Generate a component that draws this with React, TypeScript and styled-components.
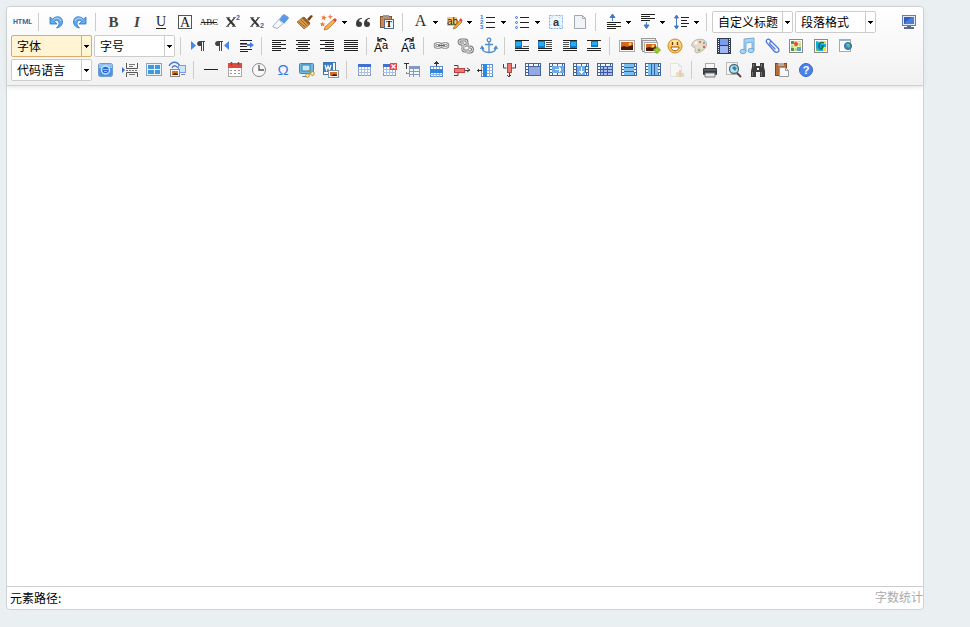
import React from "react";
import styled, { createGlobalStyle, css } from "styled-components";

const GlobalStyle = createGlobalStyle`
  * { box-sizing: border-box; }
  body {
    margin: 0;
    background: #eaeff2;
    color: #000;
    font: 12px/20px "Noto Sans CJK SC", sans-serif;
  }
`;

const Page = styled.main`
  padding: 6px 46px 16px 6px;
`;

const Editor = styled.section`
  display: flex;
  flex-direction: column;
  background: #fff;
  border: 1px solid #d0d3d4;
  border-radius: 4px;
`;

const Toolbar = styled.div`
  padding: 3px 2px 3px 4px;
  background: linear-gradient(#fff, #f1f1f1);
  border-bottom: 1px solid #d0d0d0;
  border-radius: 4px 4px 0 0;
  box-shadow: 0 1px 4px rgba(204, 204, 204, 0.6);
`;

const ToolRow = styled.div`
  display: flex;
  align-items: center;
  height: 24px;
`;

const Spacer = styled.span`
  flex: 1;
`;

const Divider = styled.span`
  flex: none;
  width: 1px;
  height: 18px;
  margin: 0 5px 0 3px;
  background: #ccc;
`;

const IconButton = styled.button<{ $disabled?: boolean }>`
  flex: none;
  width: 24px;
  height: 24px;
  padding: 2px;
  border: 0;
  background: none;
  opacity: ${(p) => (p.$disabled ? 0.3 : 1)};
  svg { display: block; overflow: visible; }
  &:hover { background: #fff5d4; }
`;

const MenuButton = styled.button`
  flex: none;
  display: flex;
  align-items: center;
  width: 10px;
  height: 24px;
  padding: 0 0 0 1px;
  border: 0;
  background: none;
`;

const SelectBox = styled.span<{ $active?: boolean }>`
  flex: none;
  display: grid;
  grid-template-columns: 1fr 10px;
  width: 81px;
  height: 22px;
  margin-right: 2px;
  border: 1px solid #ccc;
  border-radius: 2px;
  background: #fff;
  ${(p) => p.$active && css`
    border-color: #dcac6c;
    background: #fff5d4;
  `}
`;

const SelectField = styled.select`
  grid-area: 1 / 1 / 2 / 3;
  min-width: 0;
  padding: 0 12px 0 5px;
  border: 0;
  appearance: none;
  background: none;
  color: #000;
  font: inherit;
`;

const SelectArrow = styled.span<{ $active?: boolean }>`
  grid-area: 1 / 2 / 2 / 3;
  display: flex;
  align-items: center;
  justify-content: center;
  border-left: 1px solid ${(p) => (p.$active ? "#dcac6c" : "#ccc")};
  pointer-events: none;
`;

const TextArea = styled.textarea`
  display: block;
  width: 100%;
  height: 500px;
  padding: 8px;
  border: 0;
  outline: 0;
  resize: none;
  background: transparent;
  font: 16px/24px "Noto Sans CJK SC", sans-serif;
`;

const StatusBar = styled.footer`
  display: flex;
  justify-content: space-between;
  height: 23px;
  padding-left: 3px;
  border-top: 1px solid #ccc;
  line-height: 22px;
`;

const WordCount = styled.span`
  color: #aaa;
  line-height: 20px;
`;

const serif = "Liberation Serif, serif";
const sans = "Liberation Sans, sans-serif";

const Lines = ({ d, c = "#222" }: { d: string; c?: string }) => (
  <path d={d} stroke={c} fill="none" shapeRendering="crispEdges" />
);

const Caret = () => (
  <svg width="5" height="3" viewBox="0 0 5 3" aria-hidden="true">
    <path d="M0 0h5v1H4v1H3v1H2V2H1V1H0z" shapeRendering="crispEdges" />
  </svg>
);

const Photo = ({ x, y, w, h }: { x: number; y: number; w: number; h: number }) => (
  <g>
    <rect x={x + 0.5} y={y + 0.5} width={w - 1} height={h - 1} fill="#fff" stroke="#aaa" />
    <rect x={x + 2} y={y + 2} width={w - 4} height={h - 4} fill="#d9671c" />
    <path d={`M${x + 2} ${y + h - 2}v-3l3 -1 3 1 ${w - 10} -2v5z`} fill="#4b1804" />
    <circle cx={x + w - 5} cy={y + 4} r="1.5" fill="#ffd769" />
  </g>
);

const curl = (
  <>
    <path d="M4 5v7h7L8.500 9.500C10 7.500 13 8.500 13 11.500c0 2-1 3-2.500 4.500C14 15.500 16.500 13 16.500 10 16.500 4.500 10.500 3 6.500 7z" fill="#62aaf0" stroke="#2f74c0" strokeWidth=".8" />
    <path d="M7.500 7.500C10 5 14 6 15 9" fill="none" stroke="#b9dcff" />
  </>
);

/* Table outline with white cells round a filled block, used by the merge and split commands. */
type StripProps = { x?: number; y?: number; w?: number; h?: number; fill?: string; children?: React.ReactNode };
const Strip = ({ x = 6, y = 4, w = 10, h = 11, fill = "#6fabe4", children }: StripProps) => (
  <g shapeRendering="crispEdges">
    <rect x="3" y="3" width="16" height="13" fill="#41659f" />
    <path d="M4 5h2M7 5h4M12 5h4M17 5h1M4 8h2M16 8h2M4 11h2M16 11h2M4 14h2M7 14h4M12 14h4M17 14h1" stroke="#f1f8ff" strokeWidth="2" />
    <rect x={x} y={y} width={w} height={h} fill={fill} />
    {children}
  </g>
);

const TableGrid = ({ x = 4, y = 4, w = 13, h = 12 }) => (
  <g shapeRendering="crispEdges">
    <rect x={x + 0.5} y={y + 0.5} width={w - 1} height={h - 1} fill="#fff" stroke="#7d9bd0" />
    <rect x={x} y={y} width={w} height="3" fill="#3f72cf" />
    <path d={`M${x} ${y + 5.5}h${w}M${x} ${y + 8.5}h${w}M${x + 3.5} ${y + 3}v${h - 3}M${x + 6.5} ${y + 3}v${h - 3}M${x + 9.5} ${y + 3}v${h - 3}`} stroke="#a9bfe4" />
  </g>
);

const BlueBox = ({ x, y = 5, h = 7 }: { x: number; y?: number; h?: number }) => (
  <g shapeRendering="crispEdges">
    <rect x={x} y={y} width="7" height={h} fill="#1478c8" />
    <rect x={x + 1} y={y + 1} width="5" height={h - 3} fill="#25aef4" />
  </g>
);

const Case = ({ x, flip }: { x: number; flip?: boolean }) => (
  <g>
    <text x={x} y="16" fontFamily={sans} fontSize="12">A</text>
    <text x={x + 8} y="13" fontFamily={sans} fontSize="11">a</text>
    <path d={flip ? `M${x + 4} 5c1-3 5-3 7-1M${x + 12} 1v4h-4` : `M${x + 12} 5c-1-3-5-3-7-1M${x + 4} 1v4h4`} fill="none" stroke="#000" strokeWidth="1.2" />
  </g>
);

const Cross = () => (
  <>
    <path d="M4.500 6l7 8" stroke="#333" strokeWidth="2" />
    <path d="M11.500 6l-7 8" stroke="#333" strokeWidth="1.200" />
    <Lines d="M3 5.500h4M10 5.500h3M3 14.500h3M9 14.500h4" c="#777" />
  </>
);

const icons: Record<string, React.ReactNode> = {
  html: <text x="9.500" y="12" textAnchor="middle" fontFamily="Roboto, sans-serif" fontWeight="700" fontSize="7" fill="#39699b">HTML</text>,
  undo: curl,
  redo: <g transform="translate(20 0) scale(-1 1)">{curl}</g>,
  bold: <text x="10.500" y="15" textAnchor="middle" fontFamily={serif} fontWeight="700" fontSize="15" fill="#444">B</text>,
  italic: <text x="10" y="15" textAnchor="middle" fontFamily={serif} fontWeight="700" fontStyle="italic" fontSize="15" fill="#444">I</text>,
  underline: <><text x="10" y="14" textAnchor="middle" fontFamily={serif} fontSize="14" fill="#222">U</text><Lines d="M5 16.500h10" /></>,
  fontborder: <><text x="10" y="15" textAnchor="middle" fontFamily={serif} fontSize="14" fill="#222">A</text><rect x="3.500" y="3.500" width="13" height="13" fill="none" stroke="#555" /></>,
  strike: <><text x="10" y="13" textAnchor="middle" fontFamily={serif} fontSize="9" fill="#222">ABC</text><Lines d="M2 10.500h16" /></>,
  sup: <><Cross /><text x="13" y="8" fontFamily={sans} fontWeight="700" fontSize="7" fill="#2a62cc">2</text></>,
  sub: <><Cross /><text x="13" y="16" fontFamily={sans} fontWeight="700" fontSize="7" fill="#2a62cc">2</text></>,
  eraser: <><path d="M2 14L12 3q1-1 2 0l3 2q1 1 0 2L7 16q-1 1-2 0l-3-1z" fill="#f6f8fb" stroke="#8a9fb9" strokeWidth=".8" /><path d="M8 8l4-5q1-1 2 0l3 2q1 1 0 2l-4 5z" fill="#5c9ae8" /><path d="M8 8l5 4" stroke="#c8defa" /></>,
  brush: <><path d="M12 7l4-4 2 1-4 5z" fill="#7a4015" /><path d="M7 6l2-1 6 6-1 2z" fill="#a45d20" stroke="#6d3a12" strokeWidth=".6" /><path d="M7 6L2 10l7 7 5-4z" fill="#d39a4c" stroke="#9b6425" strokeWidth=".8" /><path d="M4 10l6 5M6 8l6 6" stroke="#93591d" strokeWidth=".8" /></>,
  wand: <><path d="M6 15l9-8 2 2-8 8-4 1z" fill="#f6b44b" stroke="#a76322" strokeWidth=".7" /><path d="M14 8l2-2 2 2-2 2z" fill="#e3483c" /><path d="M11 2l1 2 2 .5-2 1-.5 2-1-2-2-.5 2-1zM5 3l1 2 2 0-2 1.500 0 2-1.500-1.500-2 .5 1-2-1-1.500 2 .5zM3.500 10l1 1.500h2l-1.500 1 .5 2-2-1-1.500 1v-2l-1-1 2-.5z" fill="#f2793d" /></>,
  quote: <path d="M9 6C5 6 3 8.500 3 12c0 2 1 3 3 3s3-1 3-3-1.500-2.800-3-2.500C6 8 7 7 9 6.800zM17 6c-4 0-6 2.500-6 6 0 2 1 3 3 3s3-1 3-3-1.500-2.800-3-2.500c0-1.500 1-2.500 3-2.700z" fill="#3b3b3b" />,
  pastetext: <><rect x="3.500" y="4.500" width="11" height="11" fill="#c58a5c" stroke="#8c4f25" /><rect x="6" y="3" width="6" height="3" fill="#999" /><rect x="7.500" y="7.500" width="9" height="9" fill="#f4f8ff" stroke="#55688b" /><text x="12" y="15" textAnchor="middle" fontFamily={serif} fontSize="9" fontWeight="700">T</text></>,
  forecolor: <text x="10.500" y="14" textAnchor="middle" fontFamily={serif} fontSize="16" fill="#333">A</text>,
  backcolor: <><rect x="3" y="5" width="10" height="9" fill="#ffc56e" /><text x="3" y="13" fontFamily={sans} fontSize="10" fill="#222">ab</text><path d="M10 15l6-7 2 2-6 6-3 1z" fill="#f0a73d" stroke="#8c5523" strokeWidth=".6" /><path d="M16 7l2 2" stroke="#d9423b" strokeWidth="2" /></>,
  ol: <><g fontFamily={sans} fontSize="6" fontWeight="700" fill="#3a70dd"><text x="2" y="7">1</text><text x="2" y="12">2</text><text x="2" y="17">3</text></g><Lines d="M8 5.500h9M8 10.500h9M8 15.500h9" /></>,
  ul: <><g fill="#dce8ff" stroke="#4272dd"><circle cx="4.500" cy="5.500" r="1" /><circle cx="4.500" cy="10.500" r="1" /><circle cx="4.500" cy="15.500" r="1" /></g><Lines d="M8 5.500h9M8 10.500h9M8 15.500h9" /></>,
  selectall: <><rect x="3.500" y="3.500" width="13" height="13" fill="#edf5ff" stroke="#7fb0ed" strokeDasharray="2 1" /><path d="M3 8l5-5M3 15l3-3M12 17l5-5M13 6l3-3" stroke="#c4dcfa" /><text x="10" y="14" textAnchor="middle" fontFamily={sans} fontWeight="700" fontSize="11" fill="#333">a</text></>,
  cleardoc: <path d="M4.500 3.500h8l3 3v10h-11zM12.500 3.500v3h3" fill="#f1f3f8" stroke="#a3a9b3" />,
  spacetop: <><Lines d="M4 10.500h14M4 12.500h9M4 14.500h14M4 16.500h9" /><path d="M9.500 9V3M7 5.500L9.500 2 12 5.500z" fill="#4777c9" stroke="#4777c9" /></>,
  spacebottom: <><Lines d="M4 2.500h14M4 4.500h9M4 6.500h14M4 8.500h9" /><path d="M9.500 10v5M7 13l2.500 3.500L12 13z" fill="#4777c9" stroke="#4777c9" /></>,
  lineheight: <><Lines d="M10 5.500h8M10 8.500h6M10 11.500h8M10 14.500h6" /><path d="M5.500 3v14M3.500 6l2-3 2 3zM3.500 14l2 3 2-3z" fill="#4777c9" stroke="#4777c9" /></>,
  fullscreen: <><rect x="3.500" y="3.500" width="13" height="10" fill="#e2e8f5" stroke="#647fab" /><rect x="5" y="5" width="10" height="7" fill="#2d5cba" /><path d="M6 10l7-5h2v7H6z" fill="#4c7ed8" /><path d="M8 14h4v1h3v2H5v-2h3z" fill="#586b88" /></>,

  ltr: <><path d="M3 5l5 4.500L3 14z" fill="#4885ed" /><path d="M13 10C8 11 8 5 12 5h5v1h-1v9h-1V6h-1v9h-1z" fill="#444" /></>,
  rtl: <><path d="M17 5l-5 4.500L17 14z" fill="#4885ed" /><path d="M7 10C2 11 2 5 6 5h5v1h-1v9H9V6H8v9H7z" fill="#444" /></>,
  indent: <><path d="M4 4.500h12M4 7.500h7M4 10.500h7M4 13.500h12M4 15.500h8" stroke="#222" shapeRendering="crispEdges" /><path d="M4 8.500h7" stroke="#777" /><path d="M11 8h3V6l4 3-4 3v-2h-3z" fill="#3d7ceb" /></>,
  left: <Lines d="M3 4.500h14M3 6.500h9M3 8.500h14M3 10.500h9M3 12.500h14M3 14.500h9" />,
  center: <Lines d="M3 4.500h14M5 6.500h10M3 8.500h14M5 10.500h10M3 12.500h14M5 14.500h10" />,
  right: <Lines d="M3 4.500h14M8 6.500h9M3 8.500h14M8 10.500h9M3 12.500h14M8 14.500h9" />,
  justify: <Lines d="M3 4.500h14M3 6.500h14M3 8.500h14M3 10.500h14M3 12.500h14M3 14.500h14" />,
  upper: <Case x={0} />,
  lower: <Case x={3} flip />,
  link: <g fill="none"><g stroke="#888" strokeWidth="2.600"><rect x="4" y="7.500" width="6" height="4" rx="2" /><rect x="11" y="7.500" width="6" height="4" rx="2" /></g><g stroke="#e5e5e5"><rect x="4" y="7.500" width="6" height="4" rx="2" /><rect x="11" y="7.500" width="6" height="4" rx="2" /><path d="M7 9.500h7" stroke="#666" /></g></g>,
  unlink: <g fill="none"><path d="M9 8H6a2 2 0 010-4h4a2 2 0 012 2v2M9 11a2 2 0 012-2h3M12 16h3a2 2 0 000-5h-2M8 8v4a2 2 0 002 3h4" stroke="#777" strokeWidth="2.800" /><path d="M9 8H6a2 2 0 010-4h4a2 2 0 012 2v2M9 11a2 2 0 012-2h3M12 16h3a2 2 0 000-5h-2M8 8v4a2 2 0 002 3h4" stroke="#eee" /></g>,
  anchor: <g fill="none" stroke="#4f8cc9" strokeWidth="1.300"><circle cx="10" cy="4" r="1.800" /><path d="M10 6v11M6 8.500h8M3 11c0 4 3 5.500 7 5.500s7-1.500 7-5.500M1.500 13L3 10.500 5 13M15 13l2-2.500 1.500 2.500" /></g>,
  floatnone: <><BlueBox x={3} /><Lines d="M3 4.500h14M3 12.500h14M3 14.500h14" /><Lines d="M11 10.500h6" c="#666" /></>,
  floatleft: <><BlueBox x={2} /><Lines d="M2 4.500h14M2 12.500h14M2 14.500h14" /><Lines d="M10 6.500h6M10 8.500h6M10 10.500h6" c="#555" /></>,
  floatright: <><BlueBox x={10} /><Lines d="M3 4.500h14M3 12.500h14M3 14.500h14" /><Lines d="M3 6.500h6M3 8.500h6M3 10.500h6" c="#555" /></>,
  floatcenter: <><BlueBox x={7} h={6} /><Lines d="M3 4.500h14M3 12.500h14M3 14.500h14" /></>,
  image: <Photo x={2} y={4} w={16} h={12} />,
  images: <><rect x=".5" y="2.500" width="14" height="11" fill="#eee" stroke="#999" /><rect x="1.500" y="4.500" width="14" height="11" fill="#eee" stroke="#999" /><Photo x={3} y={6} w={14} h={11} /><path d="M13 13h2v-2h2v2h2v2h-2v2h-2v-2h-2z" fill="#a4d42c" stroke="#7fac1b" /></>,
  emoji: <><circle cx="10" cy="10" r="7" fill="#ffc95b" stroke="#d38b27" /><ellipse cx="10" cy="7" rx="5" ry="3" fill="#ffe49b" /><path d="M7.500 6v3M12.500 6v3" stroke="#6b3c12" strokeWidth="1.400" /><path d="M6 11h8c0 5-8 5-8 0z" fill="#fff" stroke="#9a5a20" /></>,
  scrawl: <><path d="M3 8c1-4 7-6 12-4 4 2 3 8-1 10-3 3-8 4-8 1 0-2 1-4-1-4s-3-1-2-3z" fill="#e6dccd" stroke="#bdb3a6" /><circle cx="7" cy="7" r="1.400" fill="#fff" /><circle cx="11" cy="6" r="1.200" fill="#d78b4d" /><circle cx="15" cy="7" r="1.200" fill="#7dabd9" /><circle cx="15" cy="11" r="1.200" fill="#d56951" /><circle cx="10" cy="14" r="1.300" fill="#84b76f" /></>,
  video: <g shapeRendering="crispEdges"><rect x="4" y="2" width="14" height="16" fill="#333c50" /><rect x="7" y="3" width="8" height="6" fill="#7b9bed" /><rect x="7" y="10" width="8" height="7" fill="#9db6f5" /><path d="M5.500 3v14M16.500 3v14" stroke="#eef" strokeDasharray="1 1" /></g>,
  music: <g fill="#a7d4f5" stroke="#5b9dd2" strokeWidth=".8"><path d="M7 3l10-1v12h-2V6L9 7v9H7z" /><ellipse cx="6" cy="15.500" rx="3" ry="2.200" /><ellipse cx="14" cy="14.500" rx="3" ry="2.200" /></g>,
  attach: <path d="M14 9L9 4C7 2 4 4 6 7l7 8c3 3 7 0 4-3l-6-6C9 5 8 7 9 8l5 5" fill="none" stroke="#4476d6" strokeWidth="1.200" strokeLinecap="round" />,
  map: <><rect x="4.500" y="3.500" width="13" height="13" fill="#fff" stroke="#888" /><path d="M6 5h10v10H6z" fill="#b9d894" /><path d="M6 9l10-3M6 13l10-3M9 5v10M13 5v10" stroke="#fff3a2" /><circle cx="11" cy="8" r="2" fill="#d94f3d" /><path d="M12 11h4v4h-4z" fill="#58aac4" /><path d="M6 5h3v3H6zM6 12h3v3H6z" fill="#469951" /></>,
  gmap: <><rect x="5.500" y="3.500" width="13" height="13" fill="#fff" stroke="#888" /><path d="M7 5h10v10H7z" fill="#10a9e9" /><path d="M7 5h10v3h-4zM14 11h3v4h-3z" fill="#fbdf24" /><path d="M7 12l3 3H7z" fill="#7bc653" /><path d="M15 7c-3-1-5 0-5 3s4 4 4 0h-2" stroke="#176f42" strokeWidth="1.500" fill="none" /></>,
  iframe: <><rect x="6.500" y="3.500" width="11" height="12" fill="#fff" stroke="#aaa" /><path d="M7 4.500h10" stroke="#9ab8da" /><circle cx="15" cy="10" r="3.500" fill="#3b89c8" stroke="#28689b" /><path d="M13 9l2-2 2 2-1 3z" fill="#69c187" /></>,

  code: <><rect x="2.500" y="3.500" width="14" height="13" rx="2" fill="#4a95e6" stroke="#6f9ccd" /><path d="M3 4h13v4H3z" fill="#91c1f4" /><circle cx="9.500" cy="10" r="4" fill="#2c68d4" stroke="#c6e6ff" strokeWidth="1.500" /><path d="M7 9.500h5M8 11.500h3" stroke="#91c7ff" /></>,
  pagebreak: <><path d="M2 7l3 3-3 3z" fill="#3f67d3" /><path d="M6.500 3v5.500h11V3M6.500 17v-4.500h11V17" fill="none" stroke="#555" /><Lines d="M6 10.500h2M9 10.500h2M12 10.500h2M15 10.500h2M9 4.500h6M9 6.500h4M9 14.500h6" c="#777" /></>,
  template: <g shapeRendering="crispEdges"><rect x="2.500" y="3.500" width="15" height="12" fill="#e8f5ff" stroke="#79a9d3" /><path d="M4 5h6v4H4zM11 5h5v4h-5zM4 10h6v4H4zM11 10h5v4h-5z" fill="#4398db" /></g>,
  background: <><path d="M1 6c3-5 8-5 11 0M4 8c1-3 4-3 6 0" fill="none" stroke="#4777cf" strokeWidth="1.300" /><rect x="10.500" y="5.500" width="7" height="7" fill="#cce3fa" stroke="#7c9de0" /><path d="M13 14.500h4" stroke="#778dac" /><rect x="2.500" y="9.500" width="9" height="7" fill="#fff" stroke="#888" /><path d="M4 11h6v4H4z" fill="#e36b18" /><path d="M4 15l3-2 3 1v1z" fill="#542009" /></>,
  hr: <Lines d="M3 9.500h14" />,
  date: <><rect x="3.500" y="3.500" width="13" height="13" fill="#fff" stroke="#aaa" /><path d="M3 3h14v5H3z" fill="#e4473e" /><path d="M6.500 2v3M13.500 2v3" stroke="#8a4540" strokeWidth="1.500" /><path d="M5 10h2v1H5zM9 10h2v1H9zM13 10h2v1h-2zM5 13h2v1H5zM9 13h2v1H9zM13 13h2v1h-2z" fill="#a88" /></>,
  time: <><circle cx="10" cy="10" r="6.500" fill="#f8f8f8" stroke="#888" /><path d="M10 5v5h5" fill="none" stroke="#555" strokeWidth="1.300" /></>,
  spechars: <text x="10" y="15" textAnchor="middle" fontFamily={sans} fontSize="15" fill="#3b76e6">Ω</text>,
  snapscreen: <><rect x="2.500" y="3.500" width="14" height="10" rx="1" fill="#6bb8e5" stroke="#4685b4" /><rect x="5" y="5" width="8" height="6" fill="#c5e8fc" stroke="#377faf" /><path d="M6 16h6v1H5z" fill="#5787aa" /><path d="M10 16l7-6M11 10l5 6" stroke="#bc8d31" /><g fill="#fff3b0" stroke="#bc8d31"><circle cx="10.500" cy="15.500" r="1.800" /><circle cx="15.500" cy="13.500" r="1.800" /></g></>,
  wordimage: <><rect x="2.500" y="2.500" width="12" height="12" fill="#fff" stroke="#3b76bb" /><rect x="3" y="3" width="9" height="9" fill="#397bc1" /><path d="M4 5l1.500 5L7 6l1.500 4L10 5" fill="none" stroke="#fff" strokeWidth="1.300" /><rect x="7.500" y="10.500" width="10" height="7" fill="#fff" stroke="#7d96ad" /><path d="M9 12h7v4H9z" fill="#df6f1e" /><path d="M10 16l3-2 3 1v1z" fill="#371b12" /></>,
  table: <TableGrid />,
  deltable: <><TableGrid x={5} /><rect x="12" y="3" width="7" height="7" fill="#e3494f" /><path d="M13.500 4.500l4 4m0-4l-4 4" stroke="#fff" strokeWidth="1.300" /></>,
  tabletitle: <g shapeRendering="crispEdges"><path d="M2 3h5v1H5v5H4V4H2z" fill="#333" /><rect x="7" y="6" width="11" height="11" fill="#8099c5" /><path d="M8 9.500h3M12 9.500h5M8 12.500h3M12 12.500h5M8 15.500h3M12 15.500h5" stroke="#f2f6ff" strokeWidth="2" /><path d="M4.500 12v2M4 13.500h3" stroke="#888" /></g>,
  insertrow: <g shapeRendering="crispEdges"><rect x="4.500" y="6.500" width="12" height="10" fill="#fff" stroke="#5d89d0" /><path d="M7.500 7v10M10.500 7v10M13.500 7v10M4 14.500h13" stroke="#90b1e3" /><rect x="4" y="9" width="13" height="4" fill="#2d89df" /><path d="M10.500 1v5M8 3.500h5M9 2.500h3" stroke="#333" /></g>,
  deleterow: <><path d="M4 5.500h4v3M4 15.500h4v-3M17 8l3 2-3 2M9 10.500h11" fill="none" stroke="#444" /><rect x="4.500" y="8.500" width="10" height="4" fill="#ef7673" stroke="#b94242" /></>,
  insertcol: <g shapeRendering="crispEdges"><rect x="7.500" y="4.500" width="11" height="12" fill="#fff" stroke="#5d89d0" /><path d="M7 7.500h12M7 10.500h12M7 13.500h12M15.500 5v12" stroke="#90b1e3" /><rect x="9" y="4" width="4" height="13" fill="#2d89df" /><path d="M3 10.500h5M4.500 9v3" stroke="#333" /></g>,
  deletecol: <><path d="M5.500 4v4h3M17.500 4v4h-4M9 15l2 2 2-2M11.500 10v7" fill="none" stroke="#444" /><rect x="9.500" y="3.500" width="4" height="9" fill="#ef7673" stroke="#b94242" /></>,
  merge: <Strip x={6} y={7} w={12} h={8} fill="#94a8e4"><path d="M4 6.500h14M6.500 4v11" stroke="#41659f" /></Strip>,
  mergeright: <Strip x={6} y={6} w={12} h={7}><path d="M9 9.500h6M13.500 7v5M14.500 8v3" stroke="#fff" /></Strip>,
  mergedown: <Strip x={7} y={6} w={8} h={9}><path d="M11.500 7v7M9 11.500h5M10 12.500h3" stroke="#fff" /></Strip>,
  splitcells: <Strip x={7} y={7} w={11} h={8} fill="#a8baf0"><path d="M6 9.500h12M6 12.500h12M9.500 6v9M13.500 6v9" stroke="#3a55a6" /></Strip>,
  splitrows: <Strip fill="#7bbdec"><path d="M6 7.500h10M6 11.500h10" stroke="#2f65a6" /></Strip>,
  splitcols: <Strip fill="#7bbdec"><path d="M9.500 4v11M12.500 4v11" stroke="#2f65a6" /></Strip>,
  charts: <><path d="M4.500 3.500h8l3 3v10h-11zM12.500 3.500v3h3" fill="#fff" stroke="#bbb" /><path d="M10 12h3v5h-3z" fill="#ddb03d" /><path d="M13 10h2v7h-2z" fill="#e2674f" /><path d="M15 13h3v4h-3z" fill="#89b747" /></>,
  print: <><rect x="6.500" y="3.500" width="9" height="5" fill="#f7f7f7" stroke="#aaa" /><rect x="4" y="8" width="14" height="7" rx="1" fill="#343a40" /><path d="M5 10h12" stroke="#7b8187" /><path d="M6 13h10v4H6z" fill="#e8e8e8" stroke="#777" /></>,
  preview: <><rect x="3.500" y="2.500" width="11" height="12" fill="#f5f5f5" stroke="#bbb" /><circle cx="11" cy="9" r="4.500" fill="#b8e0f4" stroke="#526b79" strokeWidth="1.300" /><path d="M9 8l2-2 3 2-2 3z" fill="#2e8ba6" /><path d="M14 13l4 4" stroke="#4a4a4a" strokeWidth="2" /></>,
  search: <><path d="M5 3h4v3h4V3h4v4l1 4v6h-5v-5H9v5H4v-6l1-4zM10 8h2v2h-2z" fill="#3e3e3e" fillRule="evenodd" /><path d="M5.500 12v4M14.500 12v4M6.500 4v3M14.500 4v3" stroke="#777" /></>,
  paste: <><rect x="4.500" y="3.500" width="11" height="12" fill="#b66c3a" stroke="#84471f" /><rect x="7" y="3" width="6" height="3" fill="#aaa" /><path d="M8.500 7.500h6l3 3v6h-9z" fill="#f8f8f8" stroke="#999" /><path d="M14.500 7.500v3h3" fill="none" stroke="#999" /></>,
  help: <><circle cx="11" cy="10" r="6.500" fill="#4a82ea" stroke="#3469cb" /><text x="11" y="14" textAnchor="middle" fontFamily={sans} fontSize="11" fontWeight="700" fill="#fff">?</text></>,
};

type Item = { kind: "icon" | "menu" | "select" | "divider" | "spacer"; name: string; active?: boolean };

/* Toolbar layout: "|" divider, ">" spacer, "#" drop-down, trailing "+" icon with a menu. */
const parse = (source: string): Item[] =>
  source.split(" ").map((token) => {
    if (token === "|") return { kind: "divider", name: token };
    if (token === ">") return { kind: "spacer", name: token };
    if (token.startsWith("#")) return { kind: "select", name: token.slice(1), active: token === "#字体" };
    if (token.endsWith("+")) return { kind: "menu", name: token.slice(0, -1) };
    return { kind: "icon", name: token };
  });

const rows = [
  "html | undo redo | bold italic underline fontborder strike sup sub eraser brush wand+ quote pastetext | forecolor+ backcolor+ ol+ ul+ selectall cleardoc | spacetop+ spacebottom+ lineheight+ | #自定义标题 #段落格式 > fullscreen",
  "#字体 #字号 | ltr rtl indent | left center right justify | upper lower | link unlink anchor | floatnone floatleft floatright floatcenter | image images emoji scrawl video music attach map gmap iframe",
  "#代码语言 code pagebreak template background | hr date time spechars snapscreen wordimage | table deltable tabletitle insertrow deleterow insertcol deletecol merge mergeright mergedown splitcells splitrows splitcols charts | print preview search paste help",
].map(parse);

function Tool({ item }: { item: Item }) {
  if (item.kind === "divider") return <Divider />;
  if (item.kind === "spacer") return <Spacer />;
  if (item.kind === "select") {
    return (
      <SelectBox $active={item.active}>
        <SelectField aria-label={item.name}>
          <option>{item.name}</option>
        </SelectField>
        <SelectArrow $active={item.active}><Caret /></SelectArrow>
      </SelectBox>
    );
  }
  return (
    <>
      <IconButton type="button" aria-label={item.name} $disabled={item.name === "charts"}>
        <svg width="20" height="20" viewBox="0 0 20 20" aria-hidden="true">{icons[item.name]}</svg>
      </IconButton>
      {item.kind === "menu" && (
        <MenuButton type="button" aria-label={`${item.name} menu`}><Caret /></MenuButton>
      )}
    </>
  );
}

export default function App() {
  return (
    <>
      <GlobalStyle />
      <Page>
        <Editor>
          <Toolbar role="toolbar">
            {rows.map((row, r) => (
              <ToolRow key={r}>
                {row.map((item, i) => <Tool key={i} item={item} />)}
              </ToolRow>
            ))}
          </Toolbar>
          <TextArea aria-label="editor" />
          <StatusBar>
            <span>元素路径:</span>
            <WordCount>字数统计</WordCount>
          </StatusBar>
        </Editor>
      </Page>
    </>
  );
}
